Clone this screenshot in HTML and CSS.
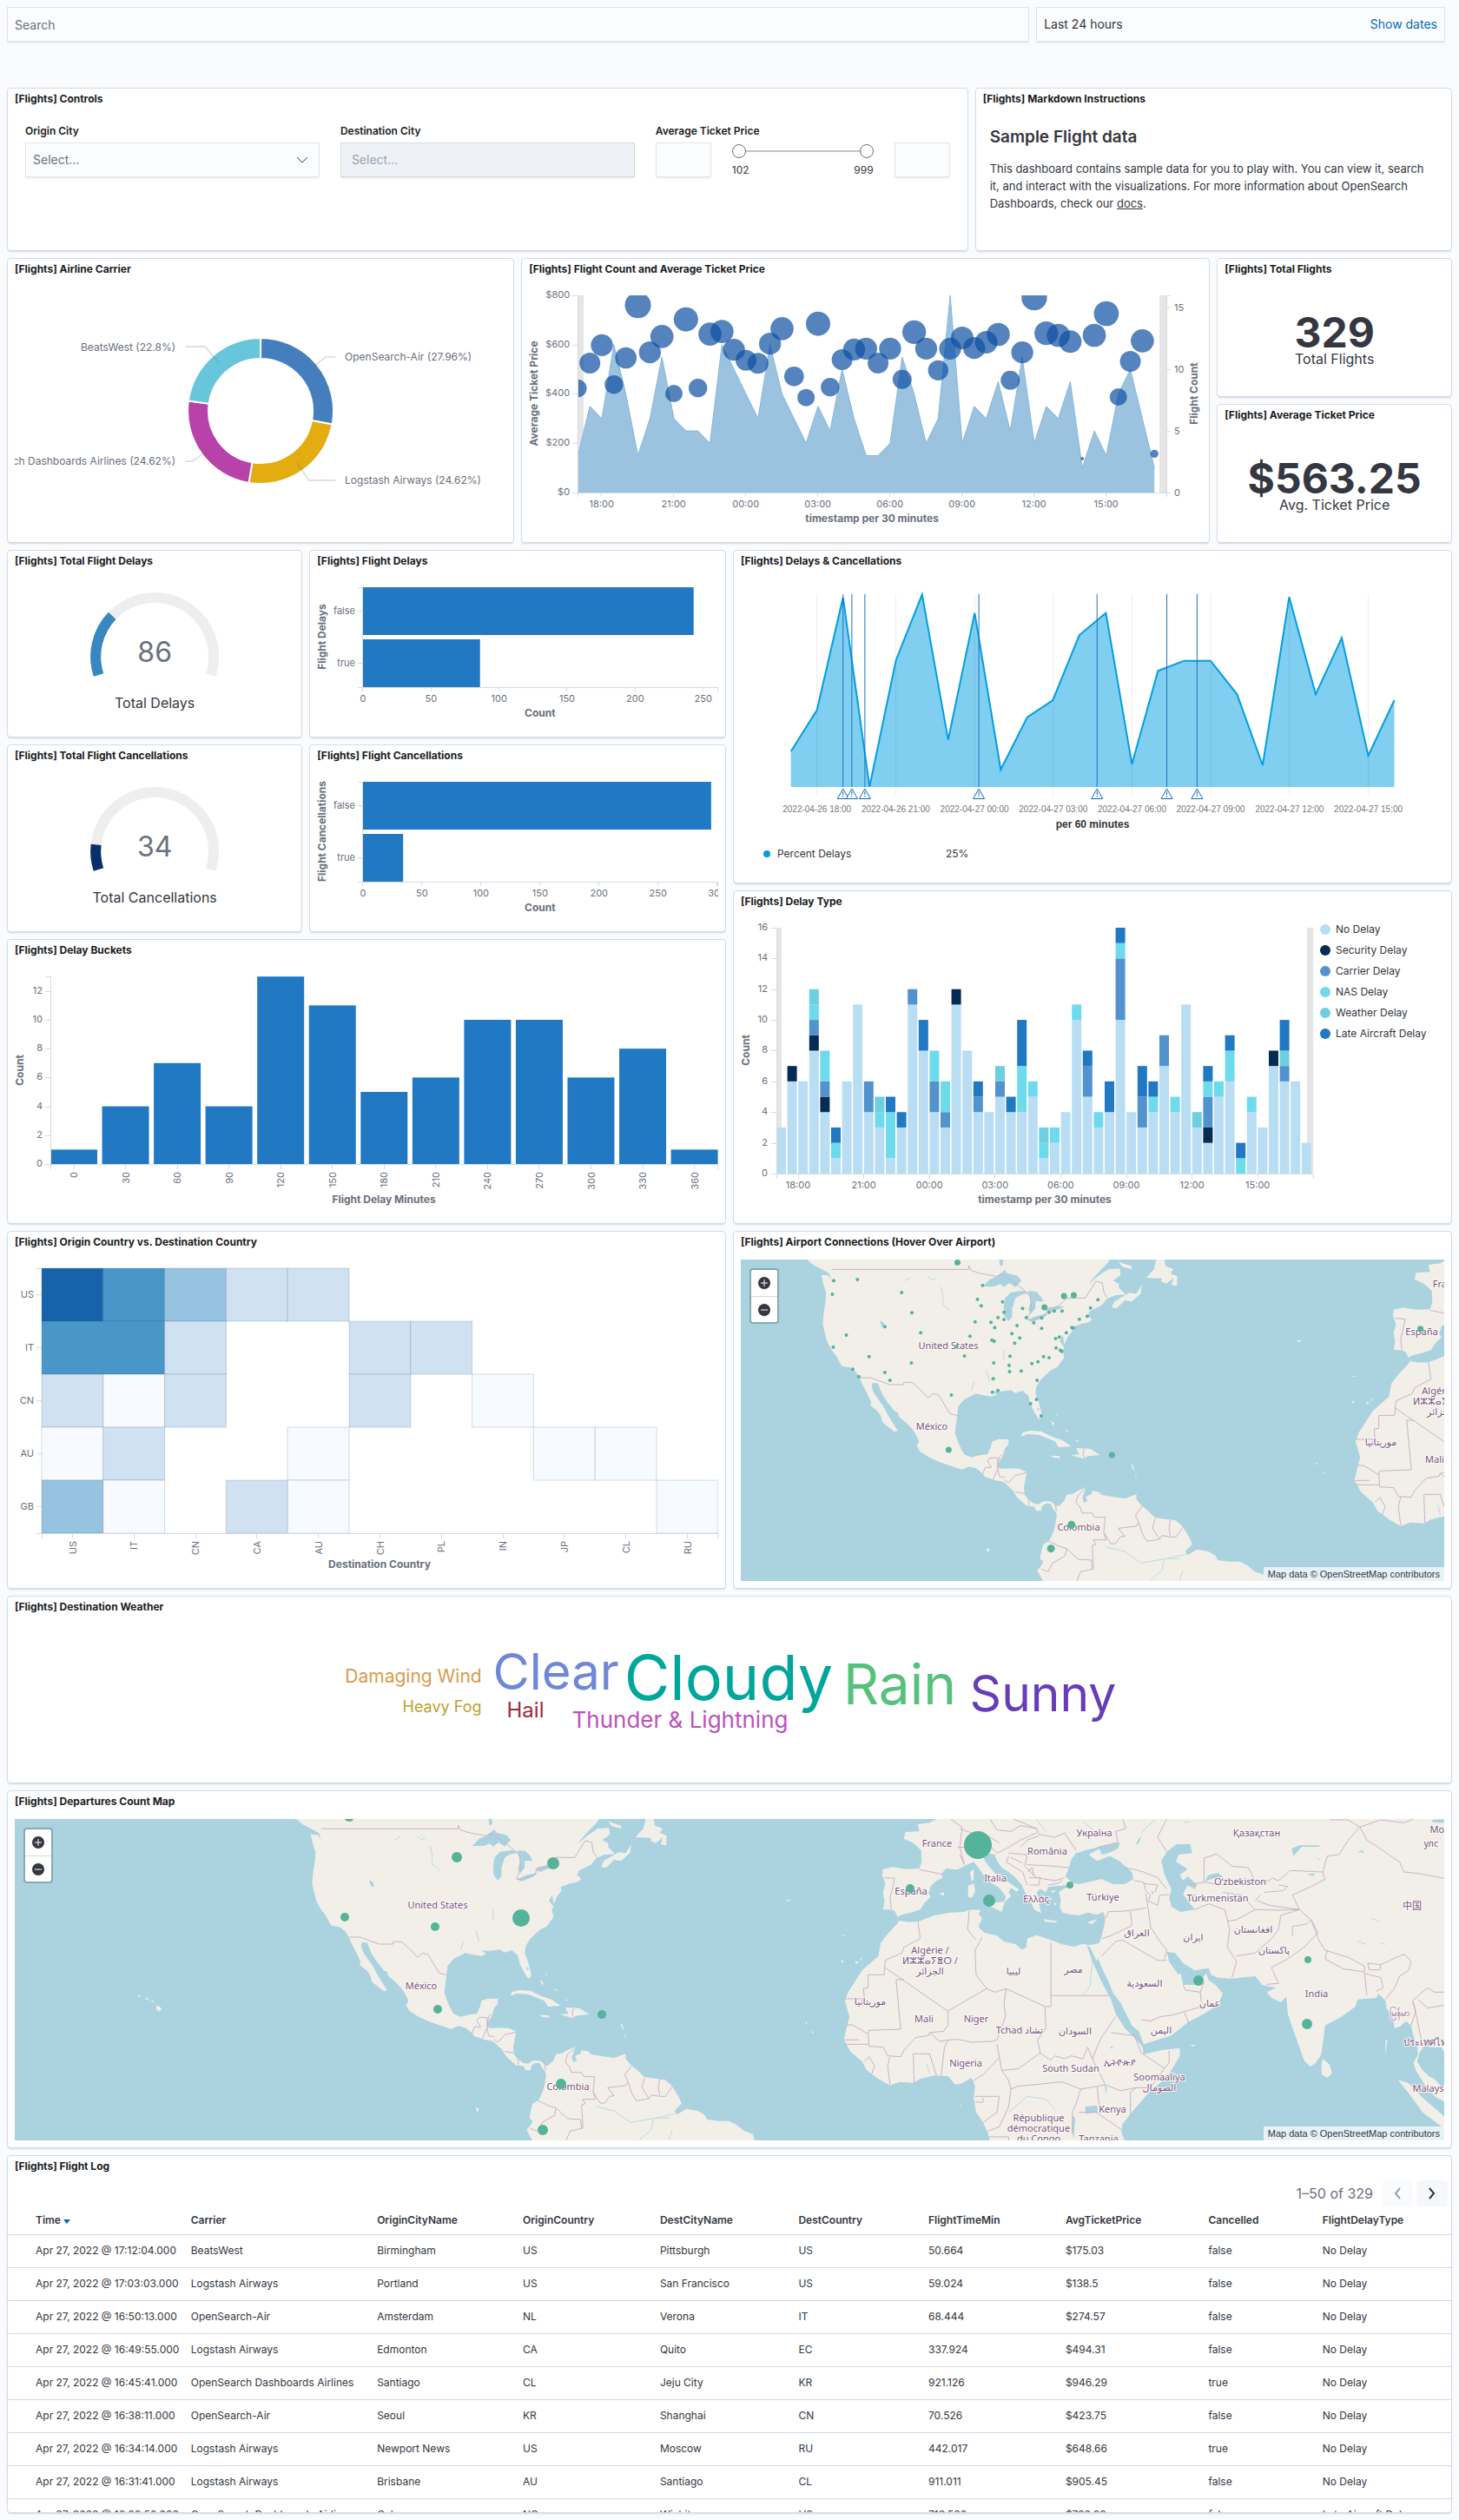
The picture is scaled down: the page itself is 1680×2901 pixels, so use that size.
FILE: index.html
```html
<!DOCTYPE html>
<html lang="en">
<head>
<meta charset="utf-8">
<meta name="viewport" content="width=device-width, initial-scale=1">
<title>[Flights] Global Flight Dashboard</title>
<link rel="stylesheet" href="styles.css">
<script src="charts.js" defer></script>
</head>
<body>
<header class="querybar">
  <input class="field search" type="search" placeholder="Search" aria-label="Search">
  <div class="field dates"><span>Last 24 hours</span><a href="#dates">Show dates</a></div>
</header>
<main class="grid">
  <section class="panel w32 h7">
    <h2>[Flights] Controls</h2>
    <form class="body controls">
      <div class="control">
        <label for="origin">Origin City</label>
        <div class="combo">
          <select id="origin" class="field select"><option>Select...</option></select>
          <svg class="chevron" viewBox="0 0 16 16" aria-hidden="true"><path d="M2 5l6 6 6-6"/></svg>
        </div>
      </div>
      <div class="control">
        <label for="dest">Destination City</label>
        <select id="dest" class="field select off" disabled><option>Select...</option></select>
      </div>
      <div class="control">
        <label for="pmin">Average Ticket Price</label>
        <div class="pricerow">
          <input id="pmin" class="field price" type="text">
          <div class="slider">
            <div class="ranges">
              <input type="range" min="102" max="999" value="102" aria-label="Lowest price">
              <input type="range" min="102" max="999" value="999" aria-label="Highest price">
            </div>
            <div class="ends"><span>102</span><span>999</span></div>
          </div>
          <input class="field price" type="text" aria-label="Maximum ticket price">
        </div>
      </div>
    </form>
  </section>
  <section class="panel w16 h7">
    <h2>[Flights] Markdown Instructions</h2>
    <div class="body markdown">
      <h3>Sample Flight data</h3>
      <p>This dashboard contains sample data for you to play with. You can view it, search it, and interact with the visualizations. For more information about OpenSearch Dashboards, check our <a href="#docs">docs</a>.</p>
    </div>
  </section>

  <section class="panel w17 h12">
    <h2>[Flights] Airline Carrier</h2>
    <div class="body"><svg class="chart" id="donut" viewBox="17 330 566 286"></svg></div>
  </section>
  <section class="panel w23 h12">
    <h2>[Flights] Flight Count and Average Ticket Price</h2>
    <div class="body"><svg class="chart" id="bubbles" viewBox="609 330 775 286"></svg></div>
  </section>
  <div class="stack w8 h12">
    <section class="panel">
      <h2>[Flights] Total Flights</h2>
      <div class="body metric"><strong>329</strong><span>Total Flights</span></div>
    </section>
    <section class="panel">
      <h2>[Flights] Average Ticket Price</h2>
      <div class="body metric"><strong>$563.25</strong><span>Avg. Ticket Price</span></div>
    </section>
  </div>

  <div class="half left">
    <div class="pair">
      <section class="panel w10 h8">
        <h2>[Flights] Total Flight Delays</h2>
        <div class="body"><svg class="chart" id="gauge-delays" viewBox="17 666 322 174"></svg></div>
      </section>
      <section class="panel w14 h8">
        <h2>[Flights] Flight Delays</h2>
        <div class="body"><svg class="chart" id="hbar-delays" viewBox="365 666 462 174"></svg></div>
      </section>
      <section class="panel w10 h8">
        <h2>[Flights] Total Flight Cancellations</h2>
        <div class="body"><svg class="chart" id="gauge-cancel" viewBox="17 666 322 174"></svg></div>
      </section>
      <section class="panel w14 h8">
        <h2>[Flights] Flight Cancellations</h2>
        <div class="body"><svg class="chart" id="hbar-cancel" viewBox="365 666 462 174"></svg></div>
      </section>
    </div>
    <section class="panel h12">
      <h2>[Flights] Delay Buckets</h2>
      <div class="body"><svg class="chart" id="buckets" viewBox="17 1114 810 286"></svg></div>
    </section>
  </div>
  <div class="half right">
    <section class="panel h14">
      <h2>[Flights] Delays &amp; Cancellations</h2>
      <div class="body"><svg class="chart" id="percent" viewBox="853 666 810 342"></svg></div>
    </section>
    <section class="panel h14">
      <h2>[Flights] Delay Type</h2>
      <div class="body"><svg class="chart" id="types" viewBox="853 1058 810 342"></svg></div>
    </section>
  </div>

  <section class="panel w24 h15">
    <h2>[Flights] Origin Country vs. Destination Country</h2>
    <div class="body"><svg class="chart" id="heat" viewBox="17 1450 810 370"></svg></div>
  </section>
  <section class="panel w24 h15">
    <h2>[Flights] Airport Connections (Hover Over Airport)</h2>
    <div class="body map">
      <svg class="chart" viewBox="853 1450 810 370" preserveAspectRatio="xMidYMid slice">
        <use href="#world" transform="translate(588 -644)"/>
        <g id="airports" class="pins"></g>
      </svg>
      <div class="zoomer">
        <button type="button" aria-label="Zoom in"><svg viewBox="0 0 16 16"><circle cx="8" cy="8" r="7.5"/><path d="M4 8h8M8 4v8"/></svg></button>
        <button type="button" aria-label="Zoom out"><svg viewBox="0 0 16 16"><circle cx="8" cy="8" r="7.5"/><path d="M4 8h8"/></svg></button>
      </div>
      <small class="credit">Map data © OpenStreetMap contributors</small>
    </div>
  </section>

  <section class="panel w48 h8">
    <h2>[Flights] Destination Weather</h2>
    <div class="body">
      <svg class="cloud" viewBox="17 1870 1646 174">
        <text x="476" y="1937" font-size="21" fill="#da9a4e">Damaging Wind</text>
        <text x="509" y="1971" font-size="18" fill="#bda030">Heavy Fog</text>
        <text x="640" y="1945" font-size="58" fill="#6f87d8">Clear</text>
        <text x="605" y="1977" font-size="24" fill="#9e2a35">Hail</text>
        <text x="839" y="1957" font-size="72" fill="#00a69b">Cloudy</text>
        <text x="783" y="1989" font-size="26" fill="#bc52bc">Thunder &amp; Lightning</text>
        <text x="1036" y="1962" font-size="64" fill="#57c17b">Rain</text>
        <text x="1201" y="1970" font-size="57" fill="#663db8">Sunny</text>
      </svg>
    </div>
  </section>

  <section class="panel w48 h15">
    <h2>[Flights] Departures Count Map</h2>
    <div class="body map">
      <svg class="chart" viewBox="17 2094 1646 370" preserveAspectRatio="xMidYMid slice">
        <defs>
          <g id="world">
            <g transform="translate(0 2055) scale(.5357 .33333)">
              <path class="land" d="M637 117L650 135 668 150 685 165 690 190 683 172 668 170 672 200 678 230 677 260 673 300 671 340 674 362 680 400 690 430 700 450 712 485 730 490 742 505 750 525 755 545 765 575 775 610 773 620 788 640 795 655 800 680 812 695 825 712 832 708 825 690 815 665 808 645 800 620 790 600 780 575 776 555 778 542 790 545 793 560 800 585 810 610 825 640 832 645 835 660 850 680 865 705 872 725 878 745 873 760 880 780 900 800 925 818 950 832 970 842 985 832 1000 838 1010 850 1020 868 1040 878 1060 885 1070 900 1080 915 1087 935 1100 955 1110 968 1125 970 1130 985 1140 985 1142 970 1150 960 1160 960 1165 975 1172 990 1174 1000 1170 1040 1165 1065 1157 1090 1145 1100 1140 1130 1138 1150 1145 1160 1140 1175 1132 1190 1140 1215 1145 1230H1623L1618 1205 1600 1195 1585 1175 1568 1160 1545 1160 1520 1155 1515 1140 1500 1125 1475 1118 1455 1138 1450 1125 1465 1100 1460 1080 1445 1040 1430 1018 1400 1012 1385 1008 1370 985 1355 965 1345 945 1345 928 1320 942 1290 935 1270 930 1265 920 1250 915 1248 928 1236 935 1240 950 1232 958 1229 940 1237 903 1220 915 1210 925 1195 930 1190 950 1180 965 1175 970 1172 965 1160 952 1145 952 1135 962 1125 960 1112 945 1105 930 1103 905 1107 870 1110 852 1095 840 1075 838 1055 840 1047 835 1050 815 1058 795 1062 770 1070 755 1070 738 1050 737 1035 745 1032 765 1025 790 1010 792 990 800 975 790 968 770 960 740 955 715 957 690 960 655 962 625 975 600 1000 580 1015 585 1035 590 1045 583 1035 572 1055 572 1075 568 1085 578 1100 570 1113 588 1118 620 1128 650 1135 668 1142 660 1140 640 1135 610 1128 580 1130 555 1140 530 1160 500 1175 488 1190 455 1186 430 1190 420 1180 400 1187 378 1190 412 1197 385 1207 365 1205 352 1225 340 1240 335 1250 325 1240 310 1245 295 1270 275 1282 252 1300 240 1322 238 1308 215 1307 200 1295 190 1311 170 1309 148 1285 150 1262 175 1243 202 1250 185 1270 150 1283 130 1287 117ZM1298 262L1315 245 1330 232 1345 235 1357 205 1354 235 1335 262 1320 258 1303 285 1292 283ZM1388 117L1383 150 1366 180 1400 182 1398 192 1410 200 1425 180 1420 205 1432 208 1433 175 1418 165 1425 150 1408 140 1405 117ZM1307 125L1335 140 1335 150 1315 142ZM1097 728L1100 715 1115 708 1140 710 1165 730 1185 740 1205 762 1178 765 1170 745 1135 722 1110 720ZM1203 792L1222 790 1215 768 1245 770 1267 792 1240 796 1232 805ZM1160 794L1178 795 1182 803 1168 802ZM337 760L348 772 341 783 336 772ZM322 742L332 746 330 750ZM296 727H302V731H296ZM313 736H319V740H313ZM1022 1112L1030 1118 1026 1130ZM1160 672L1168 682 1166 692ZM1167 640L1175 652 1178 666 1173 650ZM1190 700L1200 712 1196 712ZM1214 742L1220 740 1218 746ZM1343 862L1345 862 1344 880ZM1334 825L1337 825 1341 845 1338 843Z"/>
              <path class="water" d="M1015 210L1030 185 1045 175 1062 153 1068 165 1088 172 1098 190 1085 212 1072 198 1060 212 1052 202 1040 210ZM1063 250L1075 230 1100 225 1115 232 1095 240 1085 250 1078 285 1078 315 1070 330 1061 310 1060 280ZM1112 225L1130 228 1140 245 1145 262 1128 262 1128 285 1118 305 1113 290 1118 260ZM1110 325L1130 312 1155 302 1148 315 1122 332ZM1150 290L1175 276 1190 281 1160 300ZM1050 117H1058V135L1052 140ZM793 328L802 335 804 350 798 350ZM1131 628L1137 632 1134 640Z"/>
              <path class="river" d="M925 210L930 250 928 270 945 295M1030 540L1022 500M848 190L860 178M897 175L905 188 915 182M1060 430V465M996 540L990 570M1280 1110L1320 1125 1355 1165 1410 1150 1450 1135M1405 1150L1400 1190 1375 1225M1410 1150L1440 1150M1438 1225L1445 1190"/>
              <path class="border" d="M690 151H985V138L990 155 1010 165 1045 175 1057 168 1090 205 1105 225 1117 245 1120 290 1110 322 1118 328 1150 308 1155 285 1175 282 1195 250H1235L1245 225 1258 192 1272 198 1275 230 1282 248M750 525H773L815 549H845V541H863L880 565 898 595 908 580 920 585 935 625 945 650 962 656M1014 862L1020 835H1033L1025 812 1030 802H1047V838L1037 876M1047 835L1050 800 1057 790M1047 838L1050 865 1062 870M1062 878L1070 888 1085 862 1110 853M1085 920L1105 925M1114 948V968M1170 955L1173 985M1233 770L1230 790 1234 803M1235 908L1220 930 1215 955 1225 975 1228 992 1250 993 1255 1007H1278L1275 1060 1290 1098 1300 1098 1310 1075 1320 1073 1306 1045 1345 1038 1350 1025 1343 1000 1357 970M1350 1025L1358 1065 1368 1090 1395 1083 1400 1070 1418 1075 1430 1075 1445 1042M1385 1012L1380 1045 1395 1083M1418 1015L1415 1045 1418 1072M1275 1060L1280 1085H1252L1258 1100 1250 1105 1253 1185 1225 1195 1217 1227M1157 1090L1180 1108 1195 1115 1220 1152 1248 1155 1250 1185M1195 1115L1192 1140 1165 1165 1155 1195 1140 1185"/>
            </g>
            <g transform="translate(840 2055) scale(.5357 .33333)">
              <path class="land" d="M365 468L385 473 405 472 440 450 475 440 505 438 512 432 530 430 540 432 535 445 543 460 535 490 548 510 575 520 590 540 615 550 628 568 638 560 640 530 660 518 690 535 715 550 740 558 760 548 772 552 785 550 795 545 800 520 805 490 808 460 803 438 790 448 770 440 750 450 735 447 715 440 710 420 712 395 708 370 725 350 705 348 685 352 680 370 668 358 660 372 665 390 675 405 665 410 670 442 655 430 648 405 640 385 635 370 628 345 612 315 600 300 585 285 575 262 570 240 555 235 545 245 550 265 565 295 580 320 600 335 622 360 618 368 605 355 600 370 605 385 590 405 594 385 580 355 560 335 545 310 535 285 525 265 510 275 490 292 465 288 456 305 458 320 445 330 432 350 428 375 433 385 420 405 410 430 390 440 370 448 362 455 355 435 345 430 330 430 333 400 330 370 335 340 328 310 330 290 350 283 380 290 408 288 413 265 412 225 395 200 375 185 378 162 408 160 405 135 430 130 445 117H1540V935L1530 905 1505 905 1495 895 1483 925 1478 955 1490 985 1505 1008 1515 1015 1540 1060V1095L1520 1080 1500 1050 1485 1010 1475 985 1470 960 1480 930 1478 900 1470 865 1465 830 1455 815 1440 835 1430 840 1425 800 1412 770 1410 745 1395 720 1390 735 1350 740 1345 765 1315 800 1280 830 1278 860 1272 930 1260 960 1248 972 1235 950 1215 860 1200 790 1197 730 1185 750 1165 735 1155 715 1175 700 1160 695 1145 690 1130 660 1080 668 1050 665 1035 655 1030 632 1000 640 975 615 958 580 940 575 945 610 965 655 970 650 975 690 1005 690 1025 650 1030 675 1045 690 1060 720 1050 760 1020 790 985 820 950 865 890 895 880 850 865 830 840 750 825 720 815 680 800 630 790 590 795 550 790 610 775 560 768 552 780 610 800 680 820 740 830 790 850 840 875 880 888 905 890 930 930 915 968 908 968 935 940 1010 905 1055 870 1120 845 1170 842 1200 850 1230H560L555 1200 545 1165 530 1130 525 1080 528 1040 520 1010 500 1030 485 1035 470 1005 440 1003 410 1015 395 1028 365 1025 345 1037 320 1015 295 985 285 955 260 920 246 880 250 850 258 800 248 745 255 715 285 640 320 590 325 545 345 505 360 480ZM1437 1018L1460 1030 1490 1080 1540 1150V1190L1515 1160 1490 1130 1465 1075ZM1275 945L1290 965 1295 995 1285 1010 1273 1000 1272 970ZM513 347L525 340 528 365 522 388 513 388ZM517 300L525 290 525 325 520 332ZM560 408L592 402 585 438 562 420ZM675 463L705 470 702 475 678 472ZM768 475L790 463 780 480ZM450 375L462 370 460 382ZM690 365L702 363 695 372ZM697 405L704 410 699 416ZM688 390L694 392 690 400ZM990 896L1003 898 995 902ZM1410 880L1414 882 1410 930ZM240 605L246 608 242 615ZM270 608L278 612 272 618ZM281 600L285 595 283 606ZM163 818L168 822 164 826ZM178 850L182 852 178 858ZM122 395L132 397 126 402ZM152 413L158 415ZM240 518L248 520 244 523ZM495 1105L498 1105 497 1112Z"/>
              <path class="water" d="M750 343L735 335 722 315 730 285 735 255 745 235 765 225 790 215 810 208 840 198 835 218 820 232 800 240 818 245 840 265 865 300 868 325 850 342 825 342 800 325 770 335ZM703 352L730 342 735 352 715 358ZM928 262L940 230 960 205 990 203 995 235 965 240 960 265 985 290 968 310 975 330 985 315 1005 345 1000 360 985 345 975 375 985 400 1000 430 970 438 950 420 945 390 950 360 935 310ZM1028 312L1050 303 1062 318 1040 322 1022 333ZM1208 220L1225 208 1268 208 1268 213 1230 213 1212 245ZM765 1110L790 1106 792 1130 765 1135ZM738 1140L743 1150 740 1220 735 1190ZM806 1035L811 1045 810 1068ZM1240 308L1258 305 1255 314ZM818 902L824 904 822 912ZM905 365L912 370 910 378ZM1350 230L1360 225 1365 235ZM872 205L885 175 888 165 880 200ZM1510 120L1536 118V130L1512 128Z"/>
              <path class="land" d="M772 240L795 220 800 240 820 243 802 255 790 262Z"/>
              <path class="river" d="M760 725L775 695 780 600M760 125L800 180M885 165L900 140 915 120M425 965L430 1000M600 1130L640 1075 680 1085 700 1120M975 128H990M1260 250L1270 260M1380 460L1395 470M1350 540L1370 550M1400 545L1410 550M660 117L680 160"/>
              <path class="border" d="M405 472L410 530 375 560 370 580 335 605 332 655H298V700L288 702 290 738H248M332 628L458 768 470 780 553 703 530 655 528 570 543 525M515 435L512 500 530 535M553 703L570 715 595 703 678 765H691V545M691 727H817M375 672H358L368 843 300 847 298 860 265 828H252M470 780V830L460 850 430 855 428 865 400 872 375 915 368 938 340 935 330 905 300 902 298 860M247 880H278M247 895H300M430 855L452 885 470 880 490 878 520 888 565 885 575 880 593 800 590 750 595 703M470 880L462 905 455 1003M395 928H430L445 1003M395 928L397 1028M345 938L340 970 345 1035M290 955L300 938 312 970 305 1000M575 895L580 940 560 975 545 1000 515 1030M580 940L585 985 620 980 668 925 662 880 680 840 678 765M585 985L600 1020 605 1050 620 1040 715 1025M668 925L690 950 700 935 720 945 735 935 760 945 770 905 780 945 790 905 800 870 830 800M820 855L870 865 885 890M870 865L885 925 935 978 905 1045 875 1045 840 1055 808 1035 780 945M935 978L945 960V918M808 1035L755 1050 715 1025M755 1050L745 1100 737 1130V1200M862 1140V1060L875 1045M750 1130H788L843 1190M795 1110L790 1040M528 1075H580L575 1130 545 1165M605 1050L600 1110 580 1180 555 1195M555 1215H600V1227M528 1095H545V1080M800 530L820 520 865 485 862 435M808 460L815 437 850 435 895 425M800 590L830 540 845 535 920 605H940M900 428L905 490 925 540 940 570 935 600M885 810L905 815 925 800 950 795 1015 765 1012 715 980 708 975 690M1012 715L1020 680M978 785L988 825M870 330L890 335 895 365 905 380 900 400 920 415 925 380 945 378M865 290L890 300 920 320 940 360M850 285L865 290M890 340L920 345 915 370M895 375L900 428M1000 430L1030 410 1065 430 1075 500 1070 560 1090 610 1080 665M1070 470L1090 465 1130 430 1180 432 1225 430 1185 450 1180 500 1165 530 1130 580 1090 590M1250 465L1265 510 1235 560 1200 600 1165 630 1180 685 1155 688M1225 430L1250 465 1240 480 1210 488V520M1250 465L1268 540 1280 570 1330 595 1365 625V645L1320 635 1280 600 1285 570M1372 615L1400 620 1440 590 1452 585 1465 610 1460 640 1440 660 1430 700 1410 740M1372 615L1375 638H1398L1400 620M1365 650L1370 725M1365 650L1400 665 1405 700 1390 712M1225 430L1210 380 1250 350 1280 325 1275 300 1205 295 1180 330 1165 320M1180 345L1200 350 1190 365 1150 370M1135 400L1160 415 1225 430M1355 145L1330 190 1310 240 1285 245 1275 300M1355 145L1330 120H1290M1355 145L1370 190 1390 210 1440 265 1450 300 1480 305 1536 322M1355 145L1400 120 1450 130 1470 117M1020 335V252L1047 238 1080 280 1115 285 1135 345 1165 325M985 345L1020 335 1060 345M1060 370L1100 380 1130 430M1140 380L1130 400M1465 830L1475 780 1468 745 1500 700 1515 715H1536M1480 740L1500 770 1536 760M1470 750L1490 900M845 117L852 150 830 160 835 198M940 117L920 180 940 230M835 198L790 215M475 117L500 145 495 215 505 275M560 117L575 155 605 160 625 140 660 150M610 117L660 150 665 170 700 180 720 165 745 225M490 215H520L560 210 575 235 600 215 625 190 660 165M495 150L520 165M540 160L580 200M640 275L680 278 730 285M600 235L640 240 635 280 660 320 700 330 720 320M600 245L595 265 630 300 640 345M640 300L650 285 655 315M645 320L668 320 665 345 645 345M685 345L705 340 715 330M630 270L605 250M408 292L458 308M333 320L355 322 350 360 345 390 348 430M505 275L495 240M625 215L640 190 665 175"/>
            </g>
            <g id="places" class="places"></g>
          </g>
        </defs>
        <use href="#world"/>
        <g id="departures" class="pins"></g>
      </svg>
      <div class="zoomer">
        <button type="button" aria-label="Zoom in"><svg viewBox="0 0 16 16"><circle cx="8" cy="8" r="7.5"/><path d="M4 8h8M8 4v8"/></svg></button>
        <button type="button" aria-label="Zoom out"><svg viewBox="0 0 16 16"><circle cx="8" cy="8" r="7.5"/><path d="M4 8h8"/></svg></button>
      </div>
      <small class="credit">Map data © OpenStreetMap contributors</small>
    </div>
  </section>

  <section class="panel w48 h15">
    <h2>[Flights] Flight Log</h2>
    <div class="pager">
      <span>1–50 of 329</span>
      <button type="button" disabled aria-label="Previous page"><svg viewBox="0 0 16 16"><path d="M11 2L6 8l5 6"/></svg></button>
      <button type="button" aria-label="Next page"><svg viewBox="0 0 16 16"><path d="M5 2l5 6-5 6"/></svg></button>
    </div>
    <table class="log">
      <colgroup><col class="c12"><col class="c13"><col class="c10"><col class="c9"><col class="c10b"><col class="c9b"><col class="c9"><col class="c10c"><col class="c8"><col></colgroup>
      <thead><tr><th>Time <svg class="sort" viewBox="0 0 8 5" aria-hidden="true"><path d="M0 0h8L4 5z"/></svg></th><th>Carrier</th><th>OriginCityName</th><th>OriginCountry</th><th>DestCityName</th><th>DestCountry</th><th>FlightTimeMin</th><th>AvgTicketPrice</th><th>Cancelled</th><th>FlightDelayType</th></tr></thead>
      <tbody>
        <tr><td>Apr 27, 2022 @ 17:12:04.000</td><td>BeatsWest</td><td>Birmingham</td><td>US</td><td>Pittsburgh</td><td>US</td><td>50.664</td><td>$175.03</td><td>false</td><td>No Delay</td></tr>
        <tr><td>Apr 27, 2022 @ 17:03:03.000</td><td>Logstash Airways</td><td>Portland</td><td>US</td><td>San Francisco</td><td>US</td><td>59.024</td><td>$138.5</td><td>false</td><td>No Delay</td></tr>
        <tr><td>Apr 27, 2022 @ 16:50:13.000</td><td>OpenSearch-Air</td><td>Amsterdam</td><td>NL</td><td>Verona</td><td>IT</td><td>68.444</td><td>$274.57</td><td>false</td><td>No Delay</td></tr>
        <tr><td>Apr 27, 2022 @ 16:49:55.000</td><td>Logstash Airways</td><td>Edmonton</td><td>CA</td><td>Quito</td><td>EC</td><td>337.924</td><td>$494.31</td><td>false</td><td>No Delay</td></tr>
        <tr><td>Apr 27, 2022 @ 16:45:41.000</td><td>OpenSearch Dashboards Airlines</td><td>Santiago</td><td>CL</td><td>Jeju City</td><td>KR</td><td>921.126</td><td>$946.29</td><td>true</td><td>No Delay</td></tr>
        <tr><td>Apr 27, 2022 @ 16:38:11.000</td><td>OpenSearch-Air</td><td>Seoul</td><td>KR</td><td>Shanghai</td><td>CN</td><td>70.526</td><td>$423.75</td><td>false</td><td>No Delay</td></tr>
        <tr><td>Apr 27, 2022 @ 16:34:14.000</td><td>Logstash Airways</td><td>Newport News</td><td>US</td><td>Moscow</td><td>RU</td><td>442.017</td><td>$648.66</td><td>true</td><td>No Delay</td></tr>
        <tr><td>Apr 27, 2022 @ 16:31:41.000</td><td>Logstash Airways</td><td>Brisbane</td><td>AU</td><td>Santiago</td><td>CL</td><td>911.011</td><td>$905.45</td><td>false</td><td>No Delay</td></tr>
        <tr><td>Apr 27, 2022 @ 16:22:50.000</td><td>OpenSearch Dashboards Airlines</td><td>Oslo</td><td>NO</td><td>Wichita</td><td>US</td><td>713.520</td><td>$736.83</td><td>false</td><td>Late Aircraft Delay</td></tr>
      </tbody>
    </table>
  </section>
</main>
</body>
</html>
```

FILE: styles.css
```css
* { box-sizing: border-box; }

body {
  margin: 0;
  background: #fafbfd;
  color: #343741;
  font-family: Inter, "Liberation Sans", sans-serif;
  font-size: 14px;
  line-height: 20px;
}

input, select, button { font: inherit; color: inherit; }

.querybar {
  display: grid;
  grid-template-columns: minmax(0, 5fr) minmax(0, 2fr);
  gap: 8px;
  padding: 8px 16px 53px 8px;
}

.field {
  height: 40px;
  padding: 0 8px;
  border: 1px solid #e0e4ec;
  border-radius: 0;
  background: #fbfcfd;
  box-shadow: 0 2px 2px -1px rgba(152, 162, 179, .3);
}
.search { width: 100%; appearance: none; outline: 0; }
.search::placeholder { color: #69707d; opacity: 1; }
.dates { display: flex; align-items: center; justify-content: space-between; }
.dates a { color: #006bb4; text-decoration: none; }

.grid {
  display: grid;
  grid-template-columns: repeat(48, minmax(0, 1fr));
  grid-auto-rows: 20px;
  gap: 8px;
  padding: 0 8px 8px;
}

.w48 { grid-column: span 48; }
.w32 { grid-column: span 32; }
.w24 { grid-column: span 24; }
.w23 { grid-column: span 23; }
.w17 { grid-column: span 17; }
.w16 { grid-column: span 16; }
.w14 { grid-column: span 14; }
.w10 { grid-column: span 10; }
.w8 { grid-column: span 8; }
.h7 { grid-row: span 7; }
.h8 { grid-row: span 8; }
.h12 { grid-row: span 12; }
.h14 { grid-row: span 14; }
.h15 { grid-row: span 15; }

.half {
  grid-column: span 24;
  grid-row: span 28;
  display: grid;
  grid-auto-rows: 20px;
  gap: 8px;
}
.pair {
  grid-row: span 16;
  display: grid;
  grid-template-columns: repeat(24, minmax(0, 1fr));
  grid-auto-rows: 20px;
  gap: 8px;
}
.stack { display: flex; flex-direction: column; gap: 8px; }
.stack .panel { flex: 1; }

.panel {
  display: flex;
  flex-direction: column;
  min-width: 0;
  min-height: 0;
  overflow: hidden;
  background: #fff;
  border: 1px solid #d3dae6;
  border-radius: 4px;
  box-shadow: 0 2px 2px -1px rgba(152, 162, 179, .4);
}
.panel h2 {
  flex: none;
  margin: 0;
  padding: 0 8px;
  color: #1a1c21;
  font-size: 12px;
  font-weight: 700;
  line-height: 24px;
}
.body { flex: 1; min-height: 0; padding: 8px; }

.controls { display: flex; gap: 24px; padding: 16px 20px; }
.control { flex: 1; min-width: 0; }
.control label {
  display: block;
  margin-bottom: 4px;
  color: #1a1c21;
  font-size: 12px;
  font-weight: 600;
  line-height: 18px;
}
.combo { position: relative; }
.select { display: block; width: 100%; appearance: none; color: #69707d; opacity: 1; }
.select.off { padding-left: 12px; background: #eef2f7; color: #98a2b3; border-color: #d3dae6; }
.chevron { position: absolute; right: 12px; top: 12px; width: 16px; height: 16px; fill: none; stroke: #343741; }
.pricerow { display: flex; gap: 24px; }
.price { width: 64px; flex: none; }
.slider { flex: 1; min-width: 0; }
.ranges { position: relative; height: 20px; }
.ranges::before { content: ""; position: absolute; left: 8px; right: 8px; top: 9px; height: 2px; background: #c2c3c6; }
.ranges input { position: absolute; inset: 0; width: 100%; margin: 0; appearance: none; background: none; pointer-events: none; }
.ranges input::-webkit-slider-thumb {
  appearance: none;
  width: 16px;
  height: 16px;
  border: 1px solid #69707d;
  border-radius: 50%;
  background: #fff;
  pointer-events: auto;
}
.ends { display: flex; justify-content: space-between; font-size: 12px; line-height: 24px; }

.markdown { padding: 16px 20px 8px 16px; }
.markdown h3 { margin: 4px 0 14px; font-size: 19px; font-weight: 600; line-height: 24px; }
.markdown p { margin: 0; font-size: 13px; line-height: 20px; }
.markdown a { color: inherit; }

.metric { display: flex; flex-direction: column; align-items: center; justify-content: center; padding: 8px 8px 0; }
.metric strong { font-size: 48px; line-height: 40px; }
.metric span { font-size: 16px; }

.chart, .cloud { display: block; width: 100%; height: 100%; }
.cloud text { text-anchor: middle; }
.chart text { font-size: 11px; fill: #69707d; }
.chart .legend { font-size: 12px; }
.chart .dark { fill: #343741; }
.chart .title { font-size: 12px; font-weight: 700; }
.chart .big { font-size: 32px; }
.chart .name { font-size: 16px; fill: #343741; }
.chart .stamp { font: 10px "Liberation Sans", sans-serif; fill: #777; }
.chart .per { font: bold 12px "Liberation Sans", sans-serif; fill: #333; }
.mid { text-anchor: middle; }
.end { text-anchor: end; }
.axis { stroke: #d9dade; fill: none; shape-rendering: crispEdges; }

.map { position: relative; }
.map .chart { background: #aad3df; }
.land { fill: #f2efe9; }
.water { fill: #aad3df; }
.river { fill: none; stroke: #b9dbe4; vector-effect: non-scaling-stroke; }
.border { fill: none; stroke: #c8b3c6; vector-effect: non-scaling-stroke; }
.chart .places text {
  font-family: "Noto Sans", "DejaVu Sans", "Noto Sans CJK SC", sans-serif;
  fill: #7a5580;
  stroke: #fbf9f6;
  stroke-width: 2px;
  paint-order: stroke;
}
.pins { fill: #54b399; }
.zoomer {
  position: absolute;
  left: 18px;
  top: 18px;
  display: flex;
  flex-direction: column;
  border: 2px solid rgba(0, 0, 0, .2);
  border-radius: 4px;
  background: #fff;
  background-clip: padding-box;
}
.zoomer button { display: grid; place-items: center; width: 30px; height: 30px; padding: 0; border: 0; background: none; }
.zoomer button + button { border-top: 1px solid #d3dae6; }
.zoomer svg { width: 16px; height: 16px; fill: #343741; stroke: #fff; }
.credit {
  position: absolute;
  right: 8px;
  bottom: 8px;
  padding: 0 5px;
  background: rgba(255, 255, 255, .7);
  font: 11px/16px "Liberation Sans", sans-serif;
}

.pager { display: flex; align-items: center; justify-content: flex-end; gap: 4px; padding: 4px 4px 0; }
.pager span { margin-right: 6px; color: #69707d; font-size: 16px; }
.pager button { display: grid; place-items: center; width: 36px; height: 30px; padding: 0; border: 0; border-radius: 4px; background: #f5f7fa; color: #343741; }
.pager button:disabled { background: #fafbfd; color: #98a2b3; }
.pager svg { width: 16px; height: 16px; fill: none; stroke: currentColor; stroke-width: 2; }

.log { width: 100%; border-collapse: collapse; table-layout: fixed; font-size: 12px; }
.log th, .log td { height: 38px; padding: 0 8px; border-bottom: 1px solid #d3dae6; text-align: left; white-space: nowrap; }
.log th { height: 32px; font-weight: 600; }
.log th:first-child, .log td:first-child { padding-left: 32px; padding-right: 0; }
.sort { width: 8px; height: 5px; fill: #006bb4; }
.c12 { width: 12.2%; }
.c13 { width: 12.9%; }
.c10 { width: 10.1%; }
.c10b { width: 9.6%; }
.c10c { width: 9.9%; }
.c9 { width: 9.5%; }
.c9b { width: 9%; }
.c8 { width: 7.9%; }
```

FILE: charts.js
```js
const NS = 'http://www.w3.org/2000/svg';
const byId = id => document.getElementById(id);

function add(parent, tag, attrs, text) {
  const el = document.createElementNS(NS, tag);
  for (const key in attrs) el.setAttribute(key, attrs[key]);
  if (text !== undefined) el.textContent = text;
  parent.appendChild(el);
  return el;
}
const label = (p, x, y, s, cls = 'mid') => add(p, 'text', { x, y: y + 4, class: cls }, s);
const turned = (p, x, y, s, cls = 'mid title') =>
  add(p, 'text', { x, y, class: cls, transform: `rotate(-90 ${x} ${y})` }, s);
const rect = (p, x, y, width, height, fill) => add(p, 'rect', { x, y, width, height, fill });
const line = (p, d) => add(p, 'path', { d, class: 'axis' });
const polar = (cx, cy, r, deg) => {
  const a = deg * Math.PI / 180;
  return [cx + r * Math.sin(a), cy - r * Math.cos(a)];
};
const BLUE = '#2178c3';

/* airline carrier share */
{
  const p = byId('donut');
  let from = 0;
  [[27.96, '#457ebc'], [24.62, '#e3ac10'], [24.62, '#b842a9'], [22.8, '#67c6db']].forEach(([share, fill]) => {
    const to = from + share * 3.6;
    const a = polar(300, 473, 84, from), b = polar(300, 473, 84, to);
    const c = polar(300, 473, 60, to), d = polar(300, 473, 60, from);
    add(p, 'path', { d: `M${a}A84 84 0 0 1 ${b}L${c}A60 60 0 0 0 ${d}Z`, fill, stroke: '#fff', 'stroke-width': 2 });
    from = to;
  });
  add(p, 'path', {
    d: 'M386 411H375L357 425M386 553H356L342 533M213 399H236L252 418M213 531H221L242 517',
    fill: 'none', stroke: '#69707d', 'stroke-opacity': .2, 'stroke-width': 2
  });
  label(p, 397, 411, 'OpenSearch-Air (27.96%)', 'legend');
  label(p, 397, 553, 'Logstash Airways (24.62%)', 'legend');
  label(p, 202, 400, 'BeatsWest (22.8%)', 'legend end');
  label(p, 202, 531, 'OpenSearch Dashboards Airlines (24.62%)', 'legend end');
}

/* half-hourly flights, split by delay type */
const COLORS = { N: '#b9ddf3', S: '#052c52', C: '#5293cd', A: '#6edbed', W: '#6dcfdf', L: BLUE };
const STACKS = ('N3,N6S1,N6,N8S1C1A1W1,N4S1C1A2,N1A1L1,N6,N11,N4C2,N3A1W1,N1A3L1,N3L1,N11C1,N8L2,N4C2A2,N3C1A2,' +
  'N11S1,N8,N4C1L1,N4,N5C1W1,N4L1,N4A3L3,N5A1,N1A1W1,N2A1,N4,N10A1,N5C2L1,N3A1,N4L2,N10C4A1L1,N4,N3C2L2,' +
  'N4A1L1,N7C2,N4A1,N11,N3W1,N2S1C2A1L1,N5A1,N6A2L1,A1L1,N4A1,N3,N7S1,N6C1W1L2,N6,N2')
  .split(',').map(s => s.match(/[A-Z]\d+/g).map(m => [m[0], +m.slice(1)]));
const HOURS = ['18:00', '21:00', '00:00', '03:00', '06:00', '09:00', '12:00', '15:00'];

/* flight count and ticket price */
{
  const p = byId('bubbles');
  const clip = add(p, 'clipPath', { id: 'plot' });
  rect(clip, 665, 340, 690, 228, '#000');
  rect(p, 665, 340, 7, 227, '#e5e5e5');
  rect(p, 1335, 340, 8, 227, '#e5e5e5');
  const step = 13.83;
  const pts = STACKS.map((s, i) => [665.3 + i * step, 567 - s.reduce((t, v) => t + v[1], 0) * 14.19]);
  add(p, 'path', { d: `M665.3 567L${pts.join(' ')} ${665.3 + 48 * step} 567Z`, fill: '#9bc2df' });
  add(p, 'path', { d: `M${pts.join(' ')}`, fill: 'none', stroke: '#85b8dc' });
  const g = add(p, 'g', { 'clip-path': 'url(#plot)', fill: '#0d4fa2', 'fill-opacity': .7 });
  [[471, 31], [384, 36], [322, 38], [458, 32], [366, 37], [184, 45], [347, 38], [292, 40], [489, 30], [233, 42],
    [470, 32], [284, 40], [275, 40], [338, 38], [374, 36], [385, 36], [317, 38], [265, 40], [430, 34], [503, 30],
    [248, 42], [467, 32], [372, 36], [337, 38], [334, 38], [384, 36], [334, 38], [440, 33], [277, 41], [334, 38],
    [409, 35], [334, 38], [297, 39], [332, 38], [312, 39], [285, 40], [443, 33], [347, 38], [158, 44], [281, 41],
    [288, 40], [310, 39], [714, 6], [288, 40], [213, 43], [501, 30], [378, 36], [307, 40], [697, 14]]
    .forEach(([y, r], i) => add(g, 'circle', { cx: 665.3 + i * step, cy: 290 + y / 3, r: r / 3 }));
  line(p, 'M665 340V572M659 567.5H1348M1343 340V572M1343 340.5H1348');
  [800, 600, 400, 200, 0].forEach((v, i) => {
    label(p, 656, 339 + i * 56.7, '$' + v, 'end');
    line(p, `M659 ${340.5 + i * 56.7}H665`);
  });
  [15, 10, 5, 0].forEach((v, i) => {
    label(p, 1352, 354 + i * 71, v, '');
    line(p, `M1343 ${354.5 + i * 71}H1348`);
  });
  HOURS.forEach((h, i) => {
    label(p, 692.6 + i * 83, 580, h);
    line(p, `M${692.6 + i * 83} 567V572`);
  });
  turned(p, 619, 453, 'Average Ticket Price');
  turned(p, 1379, 453, 'Flight Count');
  label(p, 1004, 597, 'timestamp per 30 minutes', 'mid title');
}

/* gauges */
function gauge(id, value, fill, name) {
  const p = byId(id);
  const arc = (from, to, stroke) => {
    const big = to - from > 180 ? 1 : 0;
    add(p, 'path', { d: `M${polar(178, 756, 68, from)}A68 68 0 ${big} 1 ${polar(178, 756, 68, to)}`, fill: 'none', stroke, 'stroke-width': 12 });
  };
  arc(-108, 108, '#eee');
  arc(-108, -108 + value * .72, fill);
  add(p, 'text', { x: 178, y: 762, class: 'mid big' }, value);
  add(p, 'text', { x: 178, y: 815, class: 'mid name' }, name);
}
gauge('gauge-delays', 86, '#3787c0', 'Total Delays');
gauge('gauge-cancel', 34, '#08306b', 'Total Cancellations');

/* true / false bars */
function hbars(id, title, no, yes, unit, ticks) {
  const p = byId(id);
  rect(p, 418, 676, no * unit, 55, BLUE);
  rect(p, 418, 736, yes * unit, 55, BLUE);
  line(p, 'M418 676V796M412 676.5H418M412 703.5H418M412 763.5H418M412 791.5H827M826.5 791V796');
  label(p, 409, 703, 'false', 'end');
  label(p, 409, 763, 'true', 'end');
  for (let i = 0; i < ticks; i++) {
    label(p, 418 + i * 50 * unit, 804, i * 50);
    line(p, `M${418 + i * 50 * unit} 791V796`);
  }
  label(p, 622, 821, 'Count', 'mid title');
  turned(p, 375, 733, title);
}
hbars('hbar-delays', 'Flight Delays', 243, 86, 1.568, 6);
hbars('hbar-cancel', 'Flight Cancellations', 295, 34, 1.36, 7);

/* percent of delayed flights */
{
  const p = byId('percent');
  const X = v => 840 + v / 1.8667, Y = v => 625 + v / 3;
  const pts = [[132, 720], [188, 577], [244, 188], [301, 842], [358, 404], [414, 178], [470, 680], [527, 242], [583, 783],
    [640, 602], [695, 543], [752, 318], [809, 242], [865, 764], [921, 442], [977, 407], [1034, 407], [1091, 523],
    [1146, 768], [1203, 187], [1260, 523], [1316, 328], [1373, 735], [1429, 543]].map(([x, y]) => [X(x), Y(y)]);
  add(p, 'path', { d: `M${X(132)} 906L${pts.join(' ')} ${X(1429)} 906Z`, fill: '#80cef0' });
  ['26 18:00', '26 21:00', '27 00:00', '27 03:00', '27 06:00', '27 09:00', '27 12:00', '27 15:00'].forEach((t, i) => {
    const x = X(188 + i * 169.3);
    add(p, 'path', { d: `M${x} 684V916`, stroke: '#000', 'stroke-opacity': .07 });
    label(p, x, 931, '2022-04-' + t, 'mid stamp');
  });
  add(p, 'path', { d: `M${pts.join(' ')}`, fill: 'none', stroke: '#039ee1', 'stroke-width': 2 });
  [244, 263, 291, 536, 790, 940, 1005].forEach(v => {
    const x = X(v);
    add(p, 'path', { d: `M${x} 684V906`, stroke: '#1f74bd', 'stroke-width': 1 });
    add(p, 'path', { d: `M${x} 908L${x + 6.5} 919.5H${x - 6.5}Z`, fill: '#fff', stroke: '#0f69b8' });
    add(p, 'path', { d: `M${x} 911V915M${x} 916V917.5`, stroke: '#0f69b8' });
  });
  label(p, 1258, 949, 'per 60 minutes', 'mid per');
  add(p, 'circle', { cx: 883, cy: 983, r: 4, fill: '#039ee1' });
  label(p, 895, 983, 'Percent Delays', 'legend dark');
  label(p, 1089, 983, '25%', 'legend dark');
}

/* delay buckets */
{
  const p = byId('buckets');
  [1, 4, 7, 4, 13, 11, 5, 6, 10, 10, 6, 8, 1].forEach((v, i) => {
    const x = 58 + i * 59.55;
    rect(p, x, 1340 - v * 16.6, 54, v * 16.6, BLUE);
    line(p, `M${x + 27} 1340V1346`);
    turned(p, x + 31, 1349, i * 30, 'end');
  });
  line(p, 'M58 1124V1346M52 1124.5H58M52 1340.5H827M826.5 1340V1346');
  for (let v = 0; v < 13; v += 2) {
    label(p, 49, 1339 - v * 16.6, v, 'end');
    line(p, `M52 ${1340.5 - v * 16.6}H58`);
  }
  label(p, 442, 1381, 'Flight Delay Minutes', 'mid title');
  turned(p, 27, 1232, 'Count');
}

/* delay types */
{
  const p = byId('types');
  rect(p, 894, 1068, 6, 283, '#e5e5e5');
  rect(p, 1505, 1068, 7, 283, '#e5e5e5');
  STACKS.forEach((stack, i) => {
    let y = 1351;
    stack.forEach(([kind, n]) => {
      const h = n * 17.69;
      y -= h;
      rect(p, 894 + i * 12.6, y, 11, h, COLORS[kind]);
    });
  });
  line(p, 'M894 1068V1357M888 1351.5H1512M1512 1351V1357');
  for (let v = 0; v <= 16; v += 2) {
    label(p, 884, 1350 - v * 17.69, v, 'end');
    line(p, `M888 ${1351.5 - v * 17.69}H894`);
  }
  HOURS.forEach((h, i) => {
    label(p, 919 + i * 75.6, 1364, h);
    line(p, `M${919 + i * 75.6} 1351V1357`);
  });
  label(p, 1203, 1381, 'timestamp per 30 minutes', 'mid title');
  turned(p, 863, 1209, 'Count');
  [['N', 'No Delay'], ['S', 'Security Delay'], ['C', 'Carrier Delay'], ['A', 'NAS Delay'], ['W', 'Weather Delay'], ['L', 'Late Aircraft Delay']]
    .forEach(([kind, name], i) => {
      add(p, 'circle', { cx: 1526, cy: 1070 + i * 24, r: 6, fill: COLORS[kind] });
      label(p, 1538, 1070 + i * 24, name, 'legend dark');
    });
}

/* origin / destination heatmap */
{
  const p = byId('heat');
  const shades = ['#f7fbff', '#d0e1f2', '#95c3e0', '#4997c9', '#1763aa'];
  const rows = { US: '43211', IT: '331--11', CN: '101--1-0', AU: '01--0---00', GB: '20-10-----0' };
  Object.entries(rows).forEach(([name, cells], r) => {
    [...cells].forEach((c, i) => {
      if (c === '-') return;
      const el = rect(p, 48 + i * 70.8, 1460 + r * 61, 70.8, 61, shades[c]);
      el.setAttribute('stroke', '#34507a');
      el.setAttribute('stroke-opacity', .2);
    });
    label(p, 39, 1490 + r * 61, name, 'end');
    line(p, `M42 ${1490.5 + r * 61}H48`);
  });
  ['US', 'IT', 'CN', 'CA', 'AU', 'CH', 'PL', 'IN', 'JP', 'CL', 'RU'].forEach((name, i) => {
    turned(p, 87.5 + i * 70.8, 1774, name, 'end');
    line(p, `M${83.5 + i * 70.8} 1765V1771`);
  });
  line(p, 'M42 1460.5H48M48 1765V1771M42 1765.5H827M826.5 1765V1771');
  label(p, 437, 1801, 'Destination Country', 'mid title');
}

/* map names and markers */
[['United States', 504, 2193], ['México', 485, 2286], ['Colombia', 654, 2402], ['France', 1079, 2122], ['Україна', 1260, 2110],
  ['Қазақстан', 1447, 2110], ['România', 1206, 2131], ['Italia', 1146, 2162], ['España', 1049, 2177], ['Ελλάς', 1193, 2186],
  ['Türkiye', 1270, 2184], ['Oʻzbekiston', 1428, 2166], ['Türkmenistan', 1402, 2185], ['中国', 1626, 2194], ['العراق', 1309, 2225],
  ['ایران', 1374, 2230], ['افغانستان', 1443, 2221], ['پاکستان', 1467, 2245], ['Algérie /', 1071, 2245], ['ⵍⵣⵣⴰⵢⴻⵔ /', 1071, 2257],
  ['الجزائر', 1071, 2269], ['ليبيا', 1167, 2269], ['مصر', 1236, 2267], ['السعودية', 1318, 2283], ['عمان', 1393, 2306],
  ['India', 1516, 2295], ['موريتانيا', 1002, 2304], ['Mali', 1064, 2324], ['Niger', 1124, 2324], ['Tchad تشاد', 1174, 2337],
  ['السودان', 1238, 2338], ['اليمن', 1337, 2337], ['Nigeria', 1112, 2375], ['South Sudan', 1233, 2381], ['ኢትዮጵያ', 1289, 2374],
  ['Soomaaliya', 1335, 2391], ['الصومال', 1335, 2403], ['Kenya', 1281, 2428], ['République', 1196, 2438],
  ['démocratique', 1196, 2450], ['du Congo', 1196, 2462], ['Tanzania', 1265, 2462], ['မြန်မာ', 1611, 2317],
  ['ประเทศไทย', 1644, 2351], ['Malaysia', 1649, 2404], ['Монгол', 1667, 2106], ['улс', 1648, 2122]]
  .forEach(([name, x, y]) => label(byId('places'), x, y, name));

[[402, 2091, 6], [526, 2138, 6], [637, 2145, 7], [397, 2207, 5], [501, 2218, 5], [600, 2208, 10], [504, 2313, 5], [693, 2319, 5],
  [646, 2399, 6], [625, 2452, 6], [1126, 2124, 16], [1048, 2174, 5], [1139, 2188, 7], [1232, 2170, 4], [1380, 2280, 6],
  [1506, 2256, 4], [1505, 2330, 6]].forEach(([cx, cy, r]) => add(byId('departures'), 'circle', { cx, cy, r }));

const pin = (x, y, r) => add(byId('airports'), 'circle', { cx: 840 + x / 1.8667, cy: 1410 + y / 3, r });
[[490, 130], [719, 246], [740, 243], [677, 285], [471, 777], [822, 795], [1485, 359]].forEach(([x, y]) => pin(x, y, 3.5));
pin(735, 1036, 4.5);
pin(691, 1118, 4.5);
[224, 193, 275, 189, 221, 240, 370, 234, 544, 209, 533, 257, 587, 266, 541, 280, 392, 304, 334, 352, 251, 381, 223, 422, 411, 373,
  300, 455, 391, 477, 265, 499, 278, 524, 334, 510, 345, 537, 477, 588, 488, 421, 505, 453, 517, 385, 528, 335, 562, 337, 570, 355,
  577, 320, 590, 302, 590, 327, 564, 398, 569, 402, 607, 376, 613, 409, 618, 348, 624, 391, 630, 289, 638, 320, 654, 338, 671, 322,
  671, 358, 687, 302, 698, 298, 715, 298, 776, 287, 792, 259, 769, 316, 752, 326, 736, 355, 739, 356, 724, 373, 709, 388, 701, 393,
  702, 425, 711, 433, 714, 437, 675, 455, 687, 459, 663, 473, 650, 479, 603, 454, 601, 485, 602, 507, 627, 505, 568, 477, 567, 532,
  577, 572, 565, 578, 661, 537, 660, 603, 647, 618, 670, 660].forEach((x, i, all) => i % 2 || pin(x, all[i + 1], 2));
```
